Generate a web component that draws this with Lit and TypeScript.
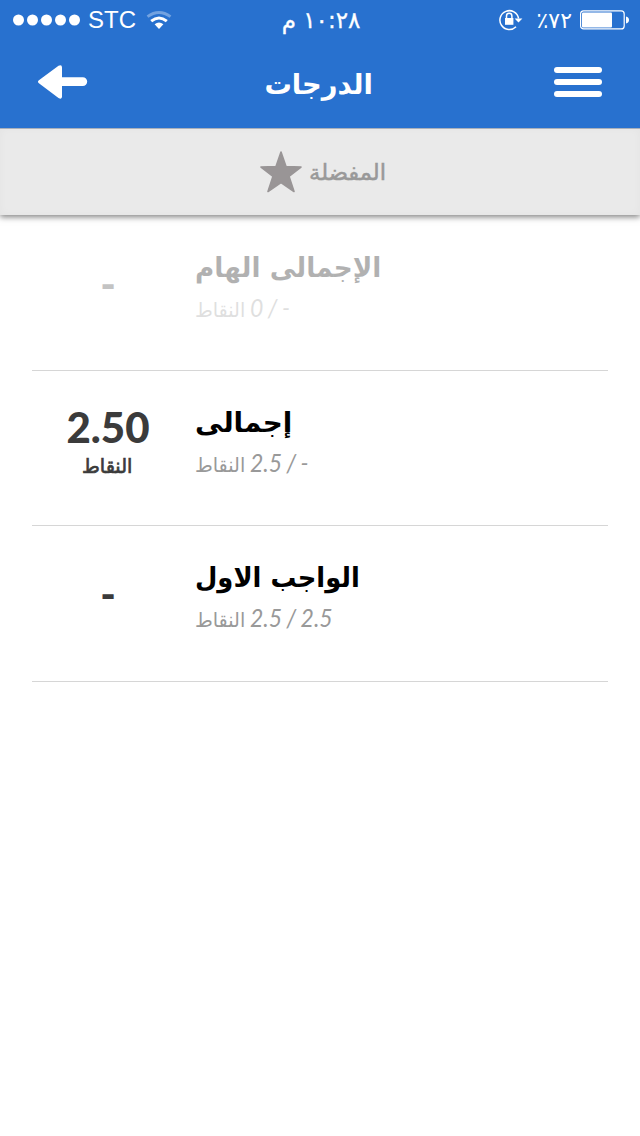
import { LitElement, html, svg, css, nothing } from "lit";
import { classMap } from "lit/directives/class-map.js";

interface Grade {
  title: string;
  range: string;
  score: string;
  size: "wide" | "short" | "long";
  muted?: boolean;
}

const GRADES: Grade[] = [
  { title: "الإجمالى الهام", range: "0 / -", score: "-", size: "wide", muted: true },
  { title: "إجمالى", range: "2.5 / -", score: "2.50", size: "short" },
  { title: "الواجب الاول", range: "2.5 / 2.5", score: "-", size: "long" },
];

const dot = (x: number) => svg`<circle cx=${x} cy="6" r="5.5" />`;

class StatusBar extends LitElement {
  static styles = css`
    :host { display: grid; grid-template-columns: 1fr auto 1fr; height: 40px; padding: 0 11px 0 13px; color: #fff; align-items: center; }
    .side { display: flex; align-items: center; height: 40px; }
    .end { justify-content: flex-end; }
    .carrier { font: 24px/40px "Liberation Sans", sans-serif; margin: 0 10px 1px 7px; }
    .time { font: 23px/40px "DejaVu Sans", sans-serif; -webkit-text-stroke: 0.3px #fff; }
    .percent { font: 22px/40px "DejaVu Sans", sans-serif; margin: 1px 8px 0 14px; }
    svg { display: block; flex: none; }
    .wifi { margin-bottom: 1px; }
  `;
  render() {
    return html`
      <div class="side">
        <svg width="68" height="12" viewBox="0 0 68 12" fill="#fff">
          ${[5.5, 19.5, 33.5, 47.5, 61.5].map((x) => dot(x))}
        </svg>
        <span class="carrier">STC</span>
        <svg class="wifi" width="26" height="20" viewBox="0 0 26 20" fill="none" stroke="#fff" stroke-width="3">
          <path d="M1.5 6.6Q13 -1.6 24.5 6.6" opacity=".35" />
          <path d="M5.2 11.2Q13 4.8 20.8 11.2" />
          <path d="M13 19L8.6 14.3Q13 10.9 17.4 14.3Z" fill="#fff" stroke="none" />
        </svg>
      </div>
      <span class="time" dir="rtl">١٠:٢٨ م</span>
      <div class="side end">
        <svg width="24" height="22" viewBox="0 0 24 22" fill="none" stroke="#fff">
          <path d="M19.6 9.5A9.4 9.4 0 1 0 17 17.7" stroke-width="1.5" />
          <path d="M15.6 9.4H23.4L19.5 13.6Z" fill="#fff" stroke="none" />
          <rect x="6" y="9" width="8.4" height="6.8" fill="#fff" stroke="none" />
          <path d="M7.5 9.5V7a2.7 2.7 0 0 1 5.4 0V9.5" stroke-width="1.5" />
        </svg>
        <span class="percent" dir="ltr">&#x202D;٪٧٢&#x202C;</span>
        <svg width="49" height="20" viewBox="0 0 49 20" fill="#fff">
          <rect x=".6" y=".9" width="43.6" height="18" rx="3" fill="none" stroke="#fff" stroke-width="1.2" />
          <rect x="2" y="2.5" width="30" height="15" rx="1" />
          <path d="M46 6.5q3 .8 3 3.5t-3 3.5z" />
        </svg>
      </div>
    `;
  }
}
customElements.define("status-bar", StatusBar);

class GradeRow extends LitElement {
  static properties = { grade: { attribute: false } };
  declare grade: Grade;
  static styles = css`
    :host { display: block; border-bottom: 1px solid #d6d6d6; }
    .row { display: grid; grid-template-columns: 152px 1fr; column-gap: 11px; height: 154px; }
    .muted { opacity: 0.3; }
    .score { display: flex; flex-direction: column; align-items: center; padding-top: 31px; color: #3b3b3b; }
    .score.empty { padding-top: 42px; }
    .value { font: 900 42px/50px Lato, sans-serif; }
    .unit { font: 20px/30px "DejaVu Sans", sans-serif; -webkit-text-stroke: 0.7px #3b3b3b; transform: scaleX(0.96); margin: -1px 2px 0 0; }
    .info { display: flex; flex-direction: column; align-items: flex-start; padding-top: 32px; }
    .title { font: bold 27px/40px "DejaVu Sans", sans-serif; color: #000; transform-origin: left; white-space: nowrap; }
    .wide { transform: scaleX(0.975); }
    .short { transform: scaleX(1.03); }
    .long { transform: scaleX(0.955); }
    .sub { display: flex; align-items: baseline; margin-top: 4px; color: #999; }
    .points { font: 20px/30px "DejaVu Sans", sans-serif; transform: scaleX(0.96); transform-origin: left; width: 55px; }
    .range { font: italic 25px/30px Lato, sans-serif; word-spacing: -1px; transform: scaleX(0.92); transform-origin: left; }
  `;
  render() {
    const g = this.grade;
    const empty = g.score === "-";
    return html`
      <div class=${classMap({ row: true, muted: !!g.muted })}>
        <div class=${classMap({ score: true, empty })}>
          <span class="value">${g.score}</span>
          ${empty ? nothing : html`<span class="unit">النقاط</span>`}
        </div>
        <div class="info">
          <span class="title ${g.size}">${g.title}</span>
          <div class="sub"><span class="points">النقاط</span><span class="range">${g.range}</span></div>
        </div>
      </div>
    `;
  }
}
customElements.define("grade-row", GradeRow);

class AppRoot extends LitElement {
  static styles = css`
    :host { display: block; min-height: 1136px; background: #fff; }
    .top { height: 128px; background: #2871cf; position: relative; z-index: 1; }
    .nav { display: grid; grid-template-columns: 1fr auto 1fr; align-items: center; height: 84px; padding: 0 37px; color: #fff; }
    .nav svg:last-child { justify-self: end; }
    .heading { font: bold 28px/40px "DejaVu Sans", sans-serif; transform: scaleX(0.975); margin: 6px 2px 0 0; }
    .tab { display: flex; justify-content: center; align-items: center; height: 87px; background: #eaeaea; color: #999;
      box-shadow: inset 0 1px 0 #a9b0bb, inset 0 0 8px rgba(0,0,0,.03), 0 2px 6px rgba(0,0,0,.5); gap: 8px; padding-left: 4px; box-sizing: border-box; }
    .fav { font: 22px/40px "DejaVu Sans", sans-serif; -webkit-text-stroke: 0.5px #999; transform: scaleX(1.03); transform-origin: left; margin: 3px 0 0 -1px; }
    .list { padding: 1px 32px 0; }
    grade-row:last-child { padding-bottom: 1px; }
    svg { display: block; }
  `;
  render() {
    return html`
      <header class="top">
        <status-bar></status-bar>
        <div class="nav">
          <svg width="51" height="34" viewBox="0 0 51 34" fill="#fff">
            <path d="M1.9 15.2L21.5 .8Q25 -.8 25 2.6V12.2H45.8a4.4 4.4 0 0 1 0 8.8H25v10.6Q25 34.8 21.5 33L1.9 18.2Q0 16.7 1.9 15.2Z" />
          </svg>
          <span class="heading">الدرجات</span>
          <svg width="49" height="30" viewBox="0 0 49 30" fill="#fff">
            <rect width="48" height="6" rx="3" /><rect y="12" width="48" height="6" rx="3" /><rect y="24" width="48" height="6" rx="3" />
          </svg>
        </div>
      </header>
      <div class="tab">
        <svg width="42" height="42" viewBox="0 0 42 42" fill="#999596" stroke="#999596" stroke-width="1.6" stroke-linejoin="round">
          <path d="M21 1L26 15.6L41 16L29 25.3L34 40.5L21 31.5L8 40.5L13 25.3L1 16L16 15.6Z" />
        </svg>
        <span class="fav">المفضلة</span>
      </div>
      <main class="list">${GRADES.map((g) => html`<grade-row .grade=${g}></grade-row>`)}</main>
    `;
  }
}
customElements.define("app-root", AppRoot);
